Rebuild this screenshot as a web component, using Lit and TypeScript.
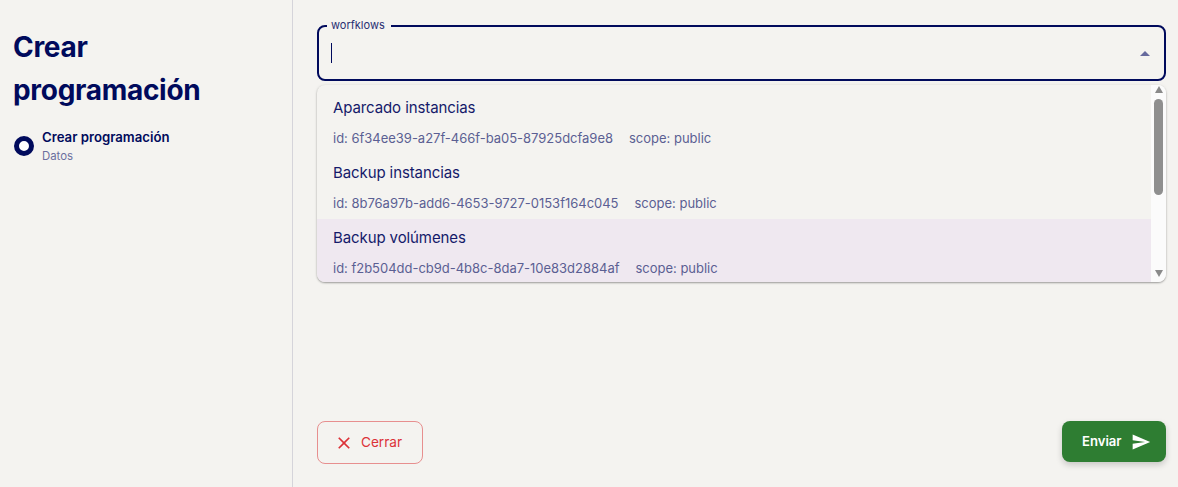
import { LitElement, html, css } from "lit";
import { customElement } from "lit/decorators.js";

const OPTIONS = [
  { name: "Aparcado instancias", id: "6f34ee39-a27f-466f-ba05-87925dcfa9e8" },
  { name: "Backup instancias", id: "8b76a97b-add6-4653-9727-0153f164c045" },
  { name: "Backup volúmenes", id: "f2b504dd-cb9d-4b8c-8da7-10e83d2884af", active: true },
];

@customElement("app-root")
export class AppRoot extends LitElement {
  static styles = css`
    :host {
      display: block;
      height: 487px;
      overflow: hidden;
      background: #f4f3f0;
      color: #000a5c;
      font-family: Inter, "Liberation Sans", sans-serif;
    }
    .page { display: flex; height: 487px; }
    .side {
      width: 279px;
      flex: none;
      border-right: 1px solid #d5d4da;
      padding: 26px 0 0 13px;
    }
    h1 {
      margin: 0;
      font-size: 28px;
      line-height: 43px;
      font-weight: 700;
      letter-spacing: -0.3px;
      width: 230px;
    }
    .step { display: flex; align-items: center; gap: 8px; margin-top: 15px; margin-left: 1px; }
    .dot {
      width: 20px; height: 20px; box-sizing: border-box; flex: none;
      border: 5px solid #000a5c; border-radius: 50%; background: #fff;
    }
    .step-text { padding-top: 2px; }
    .step-title { font-size: 13.2px; line-height: 17px; font-weight: 600; }
    .step-sub { font-size: 11.4px; line-height: 15px; margin-top: 3px; color: #6b6f9e; }
    .main {
      flex: 1;
      min-width: 0;
      padding: 17px 12px 23px 24px;
      display: flex;
      flex-direction: column;
    }
    .field { position: relative; height: 56px; margin-top: 8px; box-sizing: border-box;
      border: 2px solid #000a5c; border-radius: 8px; display: flex; align-items: center;
      padding: 0 14px 0 12px; justify-content: space-between; }
    .legend {
      position: absolute; left: 8px; top: -9px; padding: 0 6px 0 4px;
      background: #f4f3f0; font-size: 11px; line-height: 14px; color: #2a2f72;
    }
    .caret { width: 1px; height: 20px; background: #000a5c; }
    .arrow { width: 0; height: 0; border-left: 5px solid transparent; border-right: 5px solid transparent;
      border-bottom: 5px solid #666a9d; }
    .popup {
      display: flex; margin-top: 4px; height: 197px; border-radius: 8px; overflow: hidden;
      background: #f4f3f0;
      box-shadow: 0 1px 2px rgba(0,0,0,.35), 0 0 4px rgba(0,0,0,.05);
    }
    .list { flex: 1; min-width: 0; padding-top: 4px; overflow: hidden; }
    .opt { height: 65px; box-sizing: border-box; padding: 9px 16px 0; }
    .opt.active { background: #efe8f0; }
    .name { font-size: 15px; line-height: 19px; letter-spacing: -0.1px; color: #141a6a; }
    .meta { display: flex; gap: 16px; margin-top: 13px; font-size: 13px; line-height: 17px; letter-spacing: -0.015px; color: #5b5f93; }
    .bar { width: 15px; flex: none; background: #fbfbfb; display: flex; flex-direction: column; align-items: center; }
    .up, .down { width: 0; height: 0; border-left: 4.5px solid transparent; border-right: 4.5px solid transparent; }
    .up { border-bottom: 7px solid #8a8a8a; margin-top: 1px; }
    .thumb { width: 9px; height: 96px; margin-top: 6px; border-radius: 5px; background: #8f8f8f; }
    .down { border-top: 7px solid #8a8a8a; margin-top: auto; margin-bottom: 5px; }
    .actions { margin-top: auto; display: flex; justify-content: space-between; align-items: flex-start; }
    button { font: inherit; cursor: pointer; display: flex; align-items: center; box-sizing: border-box; }
    .close {
      width: 106px; height: 43px; border: 1px solid #e78f8f; border-radius: 8px; background: transparent;
      color: #dc3238; font-size: 13.6px; font-weight: 400; padding: 0 0 2px 16px; gap: 7px;
    }
    .send {
      width: 104px; height: 41px; border: 0; border-radius: 8px; background: #2e7d32; color: #fff;
      font-size: 13.1px; font-weight: 600; padding: 0 0 2px 20px; gap: 9px;
      box-shadow: 0 3px 6px rgba(0,0,0,.18);
    }
    svg { display: block; }
    .close svg { margin-top: 2px; fill: #dc3238; }
    .send svg { margin-top: 2px; fill: #fff; }
  `;

  render() {
    return html`
      <div class="page">
        <aside class="side">
          <h1>Crear programación</h1>
          <div class="step">
            <div class="dot"></div>
            <div class="step-text">
              <div class="step-title">Crear programación</div>
              <div class="step-sub">Datos</div>
            </div>
          </div>
        </aside>
        <main class="main">
          <div class="field">
            <span class="legend">worfklows</span>
            <span class="caret"></span>
            <span class="arrow"></span>
          </div>
          <div class="popup">
            <div class="list">
              ${OPTIONS.map(
                (o) => html`
                  <div class="opt ${o.active ? "active" : ""}">
                    <div class="name">${o.name}</div>
                    <div class="meta"><span>id: ${o.id}</span><span>scope: public</span></div>
                  </div>
                `
              )}
            </div>
            <div class="bar">
              <span class="up"></span>
              <span class="thumb"></span>
              <span class="down"></span>
            </div>
          </div>
          <div class="actions">
            <button class="close">
              <svg width="20" height="20" viewBox="0 0 24 24">
                <path d="M19 6.41 17.59 5 12 10.59 6.41 5 5 6.41 10.59 12 5 17.59 6.41 19 12 13.41 17.59 19 19 17.59 13.41 12z" />
              </svg>
              Cerrar
            </button>
            <button class="send">
              Enviar
              <svg width="20" height="20" viewBox="0 0 24 24">
                <path d="M2.01 21 23 12 2.01 3 2 10l15 2-15 2z" />
              </svg>
            </button>
          </div>
        </main>
      </div>
    `;
  }
}
